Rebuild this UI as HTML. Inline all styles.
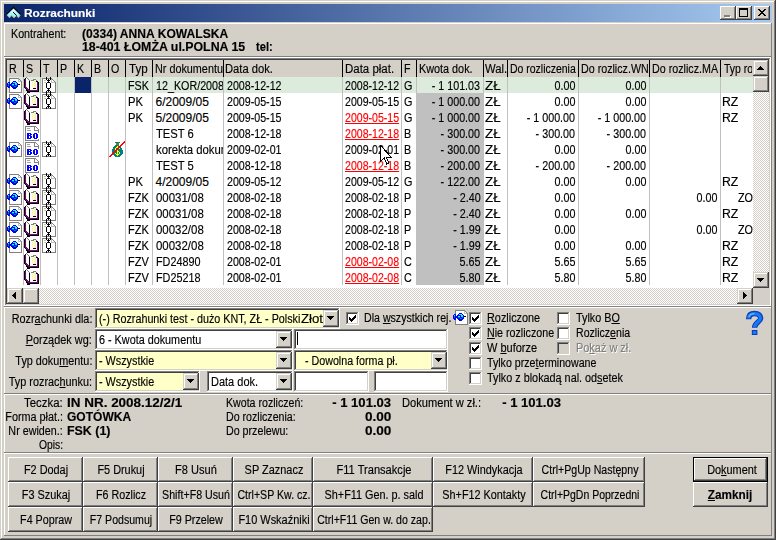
<!DOCTYPE html>
<html><head><meta charset="utf-8"><title>Rozrachunki</title>
<style>
*{box-sizing:border-box;margin:0;padding:0}
html,body{width:776px;height:540px;overflow:hidden;background:#D4D0C8}
body{position:relative;font-family:"Liberation Sans",sans-serif;font-size:12px;color:#000;line-height:14px}
div,svg,span{position:absolute}
.t{white-space:pre;line-height:14px;height:14px;-webkit-text-stroke:0.15px}
u{text-decoration:underline;text-underline-offset:1px}
.win{left:0;top:0;width:776px;height:540px;background:#D4D0C8;box-shadow:inset -1px -1px #404040,inset 1px 1px #D4D0C8,inset -2px -2px #808080,inset 2px 2px #fff}
.title{left:4px;top:4px;width:768px;height:18px;background:linear-gradient(to right,#0A246A,#A6CAF0)}
.tb{top:6px;width:16px;height:14px;background:#D4D0C8;box-shadow:inset -1px -1px #404040,inset 1px 1px #fff,inset -2px -2px #808080}
.raised{left:4px;width:768px;box-shadow:inset -1px -1px #808080,inset 1px 1px #fff}
.sunk{box-shadow:inset -1px -1px #fff,inset 1px 1px #808080,inset -2px -2px #D4D0C8,inset 2px 2px #404040}
.hs{width:1px;height:17px;top:60px;background:#000}
.ds{width:1px;top:77px;height:208px;background:#C0C0C0}
.clip{overflow:hidden}
.ic{shape-rendering:crispEdges}
.btn{height:25px;background:#D4D0C8;box-shadow:inset -1px -1px #404040,inset 1px 1px #fff,inset -2px -2px #808080}
.sbbtn{background:#D4D0C8;box-shadow:inset -1px -1px #404040,inset 1px 1px #D4D0C8,inset -2px -2px #808080,inset 2px 2px #fff}
.track{background-color:#fff;background-image:linear-gradient(45deg,#D4D0C8 25%,transparent 25%,transparent 75%,#D4D0C8 75%),linear-gradient(45deg,#D4D0C8 25%,transparent 25%,transparent 75%,#D4D0C8 75%);background-size:2px 2px;background-position:0 0,1px 1px}
.combo{height:21px;background:#fff}
.dd{top:2px;width:16px;height:17px;background:#D4D0C8;box-shadow:inset -1px -1px #404040,inset 1px 1px #D4D0C8,inset -2px -2px #808080,inset 2px 2px #fff}
.dd svg{left:4px;top:6px}
.yel{background:#FFFFC8}
.cb{width:13px;height:13px;background:#fff;box-shadow:inset -1px -1px #fff,inset 1px 1px #808080,inset -2px -2px #D4D0C8,inset 2px 2px #404040}
.cb.dis{background:#D4D0C8}
.cb svg{left:3px;top:3px}
</style></head><body>
<svg width="0" height="0" style="position:absolute"><symbol id="pin" viewBox="0 0 17 16"><path fill="#808080" d="M3 1h10v1H3zM3 2h1v1H3zM13 2h1v1H13zM3 3h1v1H3zM14 3h1v1H14zM3 4h1v1H3zM15 4h1v1H15zM15 5h1v1H15zM15 6h1v1H15zM15 7h1v1H15zM15 8h1v1H15zM15 9h1v1H15zM15 10h1v1H15zM3 11h1v1H3zM15 11h1v1H15zM3 12h1v1H3zM15 12h1v1H15zM3 13h1v1H3zM15 13h1v1H15zM3 14h1v1H3zM15 14h1v1H15zM3 15h13v1H3z"/><path fill="#FFFFFF" d="M4 2h8v1H4zM4 3h8v1H4zM13 3h1v1H13zM4 4h3v1H4zM10 4h2v1H10zM4 5h2v1H4zM11 5h4v1H11zM4 6h1v1H4zM12 6h3v1H12zM14 7h1v1H14zM12 8h3v1H12zM4 9h1v1H4zM12 9h3v1H12zM4 10h2v1H4zM11 10h4v1H11zM4 11h3v1H4zM10 11h5v1H10zM4 12h11v1H4zM4 13h11v1H4zM4 14h11v1H4z"/><path fill="#C0C0C0" d="M12 2h1v1H12zM12 3h1v1H12zM12 4h3v1H12z"/><path fill="#0000FF" d="M7 4h3v1H7zM2 5h2v1H2zM6 5h1v1H6zM10 5h1v1H10zM1 6h1v1H1zM3 6h1v1H3zM5 6h4v1H5zM11 6h1v1H11zM1 7h1v1H1zM3 7h3v1H3zM8 7h1v1H8zM11 7h1v1H11zM1 8h1v1H1zM3 8h3v1H3zM8 8h2v1H8zM11 8h1v1H11zM1 9h3v1H1zM5 9h3v1H5zM10 9h2v1H10zM2 10h2v1H2zM6 10h5v1H6zM7 11h3v1H7z"/><path fill="#00FFFF" d="M7 5h3v1H7zM2 6h1v1H2zM9 6h2v1H9zM6 7h2v1H6zM9 7h2v1H9z"/><path fill="#008080" d="M2 7h1v1H2zM2 8h1v1H2zM6 8h2v1H6zM10 8h1v1H10zM8 9h2v1H8z"/><path fill="#000000" d="M12 7h2v1H12z"/></symbol><symbol id="book" viewBox="0 0 17 16"><path fill="#808080" d="M2 0h1v1H2zM3 1h1v1H3zM4 2h1v1H4zM9 2h3v1H9zM5 3h1v1H5zM7 3h3v1H7zM12 3h1v1H12z"/><path fill="#000000" d="M1 1h1v1H1zM0 2h1v1H0zM0 3h1v1H0zM0 4h1v1H0zM5 4h1v1H5zM12 4h2v1H12zM0 5h1v1H0zM5 5h1v1H5zM14 5h1v1H14zM0 6h1v1H0zM5 6h1v1H5zM14 6h1v1H14zM0 7h1v1H0zM5 7h1v1H5zM14 7h1v1H14zM0 8h1v1H0zM5 8h1v1H5zM14 8h1v1H14zM0 9h1v1H0zM5 9h1v1H5zM14 9h1v1H14zM0 10h1v1H0zM5 10h1v1H5zM14 10h1v1H14zM1 11h1v1H1zM5 11h1v1H5zM9 11h3v1H9zM14 11h1v1H14zM2 12h1v1H2zM5 12h1v1H5zM14 12h1v1H14zM2 13h2v1H2zM14 13h1v1H14zM3 14h12v1H3zM3 15h3v1H3z"/><path fill="#FFFFFF" d="M2 1h1v1H2zM2 2h2v1H2zM2 3h3v1H2zM10 3h1v1H10zM2 4h3v1H2zM6 4h4v1H6zM2 5h3v1H2zM6 5h2v1H6zM9 5h2v1H9zM12 5h1v1H12zM2 6h3v1H2zM6 6h4v1H6zM12 6h1v1H12zM2 7h3v1H2zM6 7h2v1H6zM9 7h2v1H9zM12 7h1v1H12zM2 8h3v1H2zM6 8h4v1H6zM12 8h1v1H12zM2 9h3v1H2zM6 9h2v1H6zM9 9h2v1H9zM12 9h1v1H12zM3 10h2v1H3zM6 10h4v1H6zM12 10h1v1H12zM4 11h1v1H4zM6 11h3v1H6zM12 11h1v1H12zM6 12h7v1H6z"/><path fill="#800080" d="M1 2h1v1H1zM1 3h1v1H1zM1 4h1v1H1zM1 5h1v1H1zM13 5h1v1H13zM1 6h1v1H1zM13 6h1v1H13zM1 7h1v1H1zM13 7h1v1H13zM1 8h1v1H1zM13 8h1v1H13zM1 9h1v1H1zM13 9h1v1H13zM1 10h2v1H1zM13 10h1v1H13zM2 11h2v1H2zM13 11h1v1H13zM3 12h2v1H3zM13 12h1v1H13zM4 13h10v1H4z"/><path fill="#E8E8FF" d="M11 3h1v1H11zM11 4h1v1H11zM11 5h1v1H11zM11 6h1v1H11zM11 7h1v1H11zM11 8h1v1H11zM11 9h1v1H11zM11 10h1v1H11z"/><path fill="#FFFF00" d="M10 4h1v1H10zM8 5h1v1H8zM10 6h1v1H10zM8 7h1v1H8zM10 8h1v1H10zM8 9h1v1H8zM10 10h1v1H10z"/></symbol><symbol id="chain" viewBox="0 0 17 16"><path fill="#000000" d="M5 0h1v1H5zM9 0h1v1H9zM5 1h1v1H5zM9 1h1v1H9zM5 2h1v1H5zM7 2h1v1H7zM9 2h1v1H9zM6 3h3v1H6zM7 4h1v1H7zM6 5h3v1H6zM5 6h1v1H5zM9 6h1v1H9zM5 7h1v1H5zM9 7h1v1H9zM5 8h1v1H5zM9 8h1v1H9zM5 9h1v1H5zM9 9h1v1H9zM5 10h1v1H5zM9 10h1v1H9zM6 11h3v1H6zM7 12h1v1H7zM6 13h3v1H6zM5 14h1v1H5zM7 14h1v1H7zM9 14h1v1H9zM5 15h1v1H5zM9 15h1v1H9z"/><path fill="#808080" d="M1 1h4v1H1zM6 1h3v1H6zM10 1h1v1H10zM1 2h1v1H1zM11 2h1v1H11zM1 3h1v1H1zM12 3h1v1H12zM1 4h1v1H1zM13 4h1v1H13zM1 5h1v1H1zM14 5h1v1H14zM1 6h1v1H1zM14 6h1v1H14zM1 7h1v1H1zM14 7h1v1H14zM1 8h1v1H1zM14 8h1v1H14zM1 9h1v1H1zM14 9h1v1H14zM1 10h1v1H1zM14 10h1v1H14zM1 11h1v1H1zM14 11h1v1H14zM1 12h1v1H1zM14 12h1v1H14zM1 13h1v1H1zM14 13h1v1H14zM1 14h1v1H1zM14 14h1v1H14zM1 15h4v1H1zM6 15h3v1H6zM10 15h5v1H10z"/><path fill="#FFFFFF" d="M2 2h3v1H2zM6 2h1v1H6zM8 2h1v1H8zM2 3h1v1H2zM5 3h1v1H5zM9 3h1v1H9zM11 3h1v1H11zM2 4h5v1H2zM8 4h2v1H8zM11 4h2v1H11zM2 5h1v1H2zM5 5h1v1H5zM9 5h1v1H9zM2 6h3v1H2zM6 6h3v1H6zM10 6h4v1H10zM2 7h3v1H2zM6 7h3v1H6zM10 7h4v1H10zM2 8h3v1H2zM6 8h3v1H6zM10 8h4v1H10zM2 9h3v1H2zM6 9h3v1H6zM10 9h4v1H10zM2 10h3v1H2zM6 10h3v1H6zM10 10h4v1H10zM2 11h4v1H2zM9 11h5v1H9zM2 12h5v1H2zM8 12h6v1H8zM2 13h4v1H2zM9 13h5v1H9zM2 14h3v1H2zM6 14h1v1H6zM8 14h1v1H8zM10 14h4v1H10z"/><path fill="#C0C0C0" d="M10 2h1v1H10zM3 3h2v1H3zM10 3h1v1H10zM10 4h1v1H10zM3 5h2v1H3zM10 5h4v1H10z"/></symbol><symbol id="bo" viewBox="0 0 17 16"><path fill="#808080" d="M1 1h11v1H1zM1 2h1v1H1zM10 2h1v1H10zM12 2h1v1H12zM1 3h1v1H1zM10 3h1v1H10zM13 3h1v1H13zM1 4h1v1H1zM10 4h1v1H10zM14 4h1v1H14zM1 5h1v1H1zM10 5h5v1H10zM1 6h1v1H1zM14 6h1v1H14zM1 7h1v1H1zM14 7h1v1H14zM1 8h1v1H1zM1 9h1v1H1zM1 10h1v1H1zM1 11h1v1H1zM1 12h1v1H1zM1 13h1v1H1zM1 14h1v1H1zM14 14h1v1H14zM1 15h14v1H1z"/><path fill="#FFFFFF" d="M2 2h8v1H2zM11 2h1v1H11zM2 3h1v1H2zM6 3h4v1H6zM11 3h2v1H11zM2 4h8v1H2zM11 4h3v1H11zM2 5h1v1H2zM7 5h3v1H7zM2 6h12v1H2zM2 7h12v1H2zM2 8h1v1H2zM7 8h3v1H7zM13 8h2v1H13zM2 9h1v1H2zM5 9h1v1H5zM8 9h1v1H8zM11 9h1v1H11zM14 9h1v1H14zM2 10h1v1H2zM7 10h2v1H7zM11 10h1v1H11zM14 10h1v1H14zM2 11h1v1H2zM5 11h1v1H5zM8 11h1v1H8zM11 11h1v1H11zM14 11h1v1H14zM2 12h1v1H2zM5 12h1v1H5zM8 12h1v1H8zM11 12h1v1H11zM14 12h1v1H14zM2 13h1v1H2zM7 13h3v1H7zM13 13h2v1H13zM2 14h12v1H2z"/><path fill="#A0A0A0" d="M3 3h3v1H3zM3 5h4v1H3z"/><path fill="#0000FF" d="M3 8h4v1H3zM10 8h3v1H10zM3 9h2v1H3zM6 9h2v1H6zM9 9h2v1H9zM12 9h2v1H12zM3 10h4v1H3zM9 10h2v1H9zM12 10h2v1H12zM3 11h2v1H3zM6 11h2v1H6zM9 11h2v1H9zM12 11h2v1H12zM3 12h2v1H3zM6 12h2v1H6zM9 12h2v1H9zM12 12h2v1H12zM3 13h4v1H3zM10 13h3v1H10z"/></symbol><symbol id="money" viewBox="0 0 17 16"><path fill="#FF0000" d="M16 0h1v1H16zM15 1h2v1H15zM14 2h2v1H14zM13 3h2v1H13zM12 4h2v1H12zM11 5h2v1H11zM10 6h2v1H10zM9 7h2v1H9zM8 8h2v1H8zM7 9h2v1H7zM6 10h2v1H6zM5 11h2v1H5zM4 12h2v1H4zM3 13h2v1H3zM2 14h2v1H2zM1 15h2v1H1z"/><path fill="#008080" d="M7 1h5v1H7zM7 4h4v1H7zM6 5h3v1H6zM10 5h1v1H10zM5 6h3v1H5zM12 6h1v1H12zM5 7h2v1H5zM8 7h1v1H8zM12 7h2v1H12zM4 8h3v1H4zM10 8h4v1H10zM4 9h3v1H4zM10 9h5v1H10zM4 10h2v1H4zM8 10h1v1H8zM11 10h4v1H11zM4 11h1v1H4zM7 11h2v1H7zM10 11h1v1H10zM12 11h3v1H12zM6 12h1v1H6zM8 12h1v1H8zM10 12h1v1H10zM12 12h3v1H12zM5 13h3v1H5zM11 13h3v1H11zM6 14h3v1H6zM10 14h3v1H10zM7 15h5v1H7z"/><path fill="#808000" d="M8 2h3v1H8zM8 3h3v1H8z"/><path fill="#FFFF00" d="M9 5h1v1H9zM8 6h2v1H8zM7 7h1v1H7zM11 7h1v1H11zM7 8h1v1H7zM9 9h1v1H9zM9 10h2v1H9zM9 11h1v1H9zM11 11h1v1H11zM7 12h1v1H7zM9 12h1v1H9zM11 12h1v1H11zM8 13h3v1H8zM9 14h1v1H9z"/></symbol></svg>
<div class="win"></div>
<div class="title"></div>
<svg style="left:4px;top:4px" width="20" height="18" viewBox="4 4 20 18"><defs><linearGradient id="tg" x1="0" y1="0" x2="0" y2="1"><stop offset="0" stop-color="#fff"/><stop offset="1" stop-color="#70F0F8"/></linearGradient></defs><path d="M13.5 7.5L6.5 14.5L9.5 17.8L11.5 15.6L14 17.8L16.5 15.6L18.5 17.8L20.5 14.5Z" fill="url(#tg)"/><path d="M6.5 14.5L9.5 17.8L11.5 15.6L14 17.8L16.5 15.6L18.5 17.8L20.5 14.5" fill="none" stroke="#C0B098" stroke-width="1"/><path d="M6.3 14.7L13.5 7.5L20.7 14.7" fill="none" stroke="#000" stroke-width="1.2"/><path d="M13 12L16.6 15.6" stroke="#000" stroke-width="1"/></svg>
<div class="t" style="top:6px;font-size:11px;font-weight:bold;color:#fff;left:23.5px;transform-origin:0 0;transform:scaleX(1.079);">Rozrachunki</div>
<div class="tb" style="left:720px"><div style="left:5px;top:10px;width:6px;height:2px;background:#fff"></div><div style="left:4px;top:9px;width:6px;height:2px;background:#808080"></div></div>
<div class="tb" style="left:736px"><div style="left:3px;top:2px;width:9px;height:9px;border:1px solid #000;border-top-width:2px"></div></div>
<div class="tb" style="left:754px"><svg style="left:4px;top:3px" width="8" height="7" viewBox="0 0 8 7" shape-rendering="crispEdges"><path d="M0 0h2v1h1v1h2V1h1V0h2v1H7v1H6v1H5v1h1v1h1v1h1v1H6V6H5V5H3v1H2v1H0V6h1V5h1V4h1V3H2V2H1V1H0z" fill="#000"/></svg></div>
<div class="raised" style="top:23px;height:34px"></div>
<div class="raised" style="top:57px;height:250px"></div>
<div class="raised" style="top:307px;height:87px"></div>
<div class="raised" style="top:394px;height:59px"></div>
<div class="raised" style="top:453px;height:83px"></div>
<div class="t" style="top:27px;left:11.3px;transform-origin:0 0;transform:scaleX(0.892);">Kontrahent:</div>
<div class="t" style="top:27px;font-weight:bold;left:81.5px;transform-origin:0 0;transform:scaleX(1.007);">(0334) ANNA KOWALSKA</div>
<div class="t" style="top:40px;font-weight:bold;left:81.5px;transform-origin:0 0;transform:scaleX(1.03);">18-401 ŁOMŻA ul.POLNA 15</div>
<div class="t" style="top:40px;font-weight:bold;left:256.3px;transform-origin:0 0;transform:scaleX(0.928);">tel:</div>
<div style="left:5px;top:58px;width:766px;height:248px;background:#fff"></div>
<div style="left:7px;top:60px;width:746px;height:17px;background:#D4D0C8"></div>
<div class="clip" style="left:7px;top:60px;width:16px;height:17px">
<div class="t" style="top:2px;left:2.2px;transform-origin:0 0;transform:scaleX(0.89);">R</div>
</div>
<div class="clip" style="left:24px;top:60px;width:16px;height:17px">
<div class="t" style="top:2px;left:2.2px;transform-origin:0 0;transform:scaleX(0.89);">S</div>
</div>
<div class="clip" style="left:41px;top:60px;width:16px;height:17px">
<div class="t" style="top:2px;left:2.2px;transform-origin:0 0;transform:scaleX(0.89);">T</div>
</div>
<div class="clip" style="left:58px;top:60px;width:16px;height:17px">
<div class="t" style="top:2px;left:2.2px;transform-origin:0 0;transform:scaleX(0.89);">P</div>
</div>
<div class="clip" style="left:75px;top:60px;width:16px;height:17px">
<div class="t" style="top:2px;left:2.2px;transform-origin:0 0;transform:scaleX(0.89);">K</div>
</div>
<div class="clip" style="left:92px;top:60px;width:16px;height:17px">
<div class="t" style="top:2px;left:2.2px;transform-origin:0 0;transform:scaleX(0.89);">B</div>
</div>
<div class="clip" style="left:109px;top:60px;width:16px;height:17px">
<div class="t" style="top:2px;left:2.2px;transform-origin:0 0;transform:scaleX(0.89);">O</div>
</div>
<div class="clip" style="left:126px;top:60px;width:26px;height:17px">
<div class="t" style="top:2px;left:2.8px;transform-origin:0 0;transform:scaleX(0.964);">Typ</div>
</div>
<div class="clip" style="left:153px;top:60px;width:70px;height:17px">
<div class="t" style="top:2px;left:1.9px;transform-origin:0 0;transform:scaleX(0.901);">Nr dokumentu</div>
</div>
<div class="clip" style="left:224px;top:60px;width:118px;height:17px">
<div class="t" style="top:2px;left:1.4px;transform-origin:0 0;transform:scaleX(0.934);">Data dok.</div>
</div>
<div class="clip" style="left:343px;top:60px;width:58px;height:17px">
<div class="t" style="top:2px;left:1.5px;transform-origin:0 0;transform:scaleX(0.956);">Data płat.</div>
</div>
<div class="clip" style="left:402px;top:60px;width:14px;height:17px">
<div class="t" style="top:2px;left:2.1px;transform-origin:0 0;transform:scaleX(0.89);">F</div>
</div>
<div class="clip" style="left:417px;top:60px;width:66px;height:17px">
<div class="t" style="top:2px;left:2.0px;transform-origin:0 0;transform:scaleX(0.902);">Kwota dok.</div>
</div>
<div class="clip" style="left:484px;top:60px;width:23px;height:17px">
<div class="t" style="top:2px;left:1.2px;transform-origin:0 0;transform:scaleX(0.938);">Wal.</div>
</div>
<div class="clip" style="left:508px;top:60px;width:70px;height:17px">
<div class="t" style="top:2px;left:2.4px;transform-origin:0 0;transform:scaleX(0.872);">Do rozliczenia</div>
</div>
<div class="clip" style="left:579px;top:60px;width:70px;height:17px">
<div class="t" style="top:2px;left:2.1px;transform-origin:0 0;transform:scaleX(0.891);">Do rozlicz.WN</div>
</div>
<div class="clip" style="left:650px;top:60px;width:70px;height:17px">
<div class="t" style="top:2px;left:1.7px;transform-origin:0 0;transform:scaleX(0.892);">Do rozlicz.MA</div>
</div>
<div class="clip" style="left:721px;top:60px;width:31px;height:17px">
<div class="t" style="top:2px;left:2.7px;transform-origin:0 0;transform:scaleX(0.872);">Typ ro</div>
</div>
<div style="left:7px;top:77px;width:746px;height:16px;background:#DDEBDD"></div>
<div style="left:75px;top:77px;width:16px;height:16px;background:#0A246A"></div>
<svg class="ic" style="left:6px;top:77px" width="17" height="16"><use href="#pin"/></svg>
<svg class="ic" style="left:24px;top:77px" width="17" height="16"><use href="#book"/></svg>
<svg class="ic" style="left:41px;top:77px" width="17" height="16"><use href="#chain"/></svg>
<div class="clip" style="left:126px;top:77px;width:26px;height:16px">
<div class="t" style="top:2px;left:2.2px;transform-origin:0 0;transform:scaleX(0.892);">FSK</div>
</div>
<div class="clip" style="left:153px;top:77px;width:70px;height:16px">
<div class="t" style="top:2px;left:2.6px;transform-origin:0 0;transform:scaleX(0.894);">12_KOR/2008/12</div>
</div>
<div class="clip" style="left:224px;top:77px;width:118px;height:16px">
<div class="t" style="top:2px;left:2.5px;transform-origin:0 0;transform:scaleX(0.888);">2008-12-12</div>
</div>
<div class="clip" style="left:343px;top:77px;width:58px;height:16px">
<div class="t" style="top:2px;left:2.3px;transform-origin:0 0;transform:scaleX(0.882);">2008-12-12</div>
</div>
<div class="clip" style="left:402px;top:77px;width:14px;height:16px">
<div class="t" style="top:2px;left:1.7px;transform-origin:0 0;transform:scaleX(0.9);">G</div>
</div>
<div class="clip" style="left:417px;top:77px;width:66px;height:16px">
<div class="t" style="top:2px;transform-origin:100% 0;transform:scaleX(0.895);right:2.6px;">- 1 101.03</div>
</div>
<div class="clip" style="left:484px;top:77px;width:23px;height:16px">
<div class="t" style="top:2px;left:1.0px;transform-origin:0 0;transform:scaleX(1.116);">ZŁ</div>
</div>
<div class="clip" style="left:508px;top:77px;width:70px;height:16px">
<div class="t" style="top:2px;transform-origin:100% 0;transform:scaleX(0.895);right:2.6px;">0.00</div>
</div>
<div class="clip" style="left:579px;top:77px;width:70px;height:16px">
<div class="t" style="top:2px;transform-origin:100% 0;transform:scaleX(0.895);right:2.6px;">0.00</div>
</div>
<div style="left:417px;top:93px;width:66px;height:16px;background:#C0C0C0"></div>
<svg class="ic" style="left:6px;top:93px" width="17" height="16"><use href="#pin"/></svg>
<svg class="ic" style="left:24px;top:93px" width="17" height="16"><use href="#book"/></svg>
<svg class="ic" style="left:41px;top:93px" width="17" height="16"><use href="#chain"/></svg>
<div class="clip" style="left:126px;top:93px;width:26px;height:16px">
<div class="t" style="top:2px;left:2.1px;transform-origin:0 0;transform:scaleX(0.936);">PK</div>
</div>
<div class="clip" style="left:153px;top:93px;width:70px;height:16px">
<div class="t" style="top:2px;left:2.5px;transform-origin:0 0;transform:scaleX(1.0);">6/2009/05</div>
</div>
<div class="clip" style="left:224px;top:93px;width:118px;height:16px">
<div class="t" style="top:2px;left:2.5px;transform-origin:0 0;transform:scaleX(0.888);">2009-05-15</div>
</div>
<div class="clip" style="left:343px;top:93px;width:58px;height:16px">
<div class="t" style="top:2px;left:2.3px;transform-origin:0 0;transform:scaleX(0.882);">2009-05-15</div>
</div>
<div class="clip" style="left:402px;top:93px;width:14px;height:16px">
<div class="t" style="top:2px;left:1.7px;transform-origin:0 0;transform:scaleX(0.9);">G</div>
</div>
<div class="clip" style="left:417px;top:93px;width:66px;height:16px">
<div class="t" style="top:2px;transform-origin:100% 0;transform:scaleX(0.895);right:2.6px;">- 1 000.00</div>
</div>
<div class="clip" style="left:484px;top:93px;width:23px;height:16px">
<div class="t" style="top:2px;left:1.0px;transform-origin:0 0;transform:scaleX(1.116);">ZŁ</div>
</div>
<div class="clip" style="left:508px;top:93px;width:70px;height:16px">
<div class="t" style="top:2px;transform-origin:100% 0;transform:scaleX(0.895);right:2.6px;">0.00</div>
</div>
<div class="clip" style="left:579px;top:93px;width:70px;height:16px">
<div class="t" style="top:2px;transform-origin:100% 0;transform:scaleX(0.895);right:2.6px;">0.00</div>
</div>
<div class="clip" style="left:721px;top:93px;width:31px;height:16px">
<div class="t" style="top:2px;left:1.4px;transform-origin:0 0;transform:scaleX(1.021);">RZ</div>
</div>
<div style="left:417px;top:109px;width:66px;height:16px;background:#C0C0C0"></div>
<svg class="ic" style="left:24px;top:109px" width="17" height="16"><use href="#book"/></svg>
<div class="clip" style="left:126px;top:109px;width:26px;height:16px">
<div class="t" style="top:2px;left:2.1px;transform-origin:0 0;transform:scaleX(0.936);">PK</div>
</div>
<div class="clip" style="left:153px;top:109px;width:70px;height:16px">
<div class="t" style="top:2px;left:2.5px;transform-origin:0 0;transform:scaleX(1.0);">5/2009/05</div>
</div>
<div class="clip" style="left:224px;top:109px;width:118px;height:16px">
<div class="t" style="top:2px;left:2.5px;transform-origin:0 0;transform:scaleX(0.888);">2009-05-15</div>
</div>
<div class="clip" style="left:343px;top:109px;width:58px;height:16px">
<div class="t" style="top:2px;color:#FF0000;left:2.3px;transform-origin:0 0;transform:scaleX(0.882);"><u>2009-05-15</u></div>
</div>
<div class="clip" style="left:402px;top:109px;width:14px;height:16px">
<div class="t" style="top:2px;left:1.7px;transform-origin:0 0;transform:scaleX(0.9);">G</div>
</div>
<div class="clip" style="left:417px;top:109px;width:66px;height:16px">
<div class="t" style="top:2px;transform-origin:100% 0;transform:scaleX(0.895);right:2.6px;">- 1 000.00</div>
</div>
<div class="clip" style="left:484px;top:109px;width:23px;height:16px">
<div class="t" style="top:2px;left:1.0px;transform-origin:0 0;transform:scaleX(1.116);">ZŁ</div>
</div>
<div class="clip" style="left:508px;top:109px;width:70px;height:16px">
<div class="t" style="top:2px;transform-origin:100% 0;transform:scaleX(0.895);right:2.6px;">- 1 000.00</div>
</div>
<div class="clip" style="left:579px;top:109px;width:70px;height:16px">
<div class="t" style="top:2px;transform-origin:100% 0;transform:scaleX(0.895);right:2.6px;">- 1 000.00</div>
</div>
<div class="clip" style="left:721px;top:109px;width:31px;height:16px">
<div class="t" style="top:2px;left:1.4px;transform-origin:0 0;transform:scaleX(1.021);">RZ</div>
</div>
<div style="left:417px;top:125px;width:66px;height:16px;background:#C0C0C0"></div>
<svg class="ic" style="left:24px;top:125px" width="17" height="16"><use href="#bo"/></svg>
<div class="clip" style="left:153px;top:125px;width:70px;height:16px">
<div class="t" style="top:2px;left:2.5px;transform-origin:0 0;transform:scaleX(0.936);">TEST 6</div>
</div>
<div class="clip" style="left:224px;top:125px;width:118px;height:16px">
<div class="t" style="top:2px;left:2.5px;transform-origin:0 0;transform:scaleX(0.888);">2008-12-18</div>
</div>
<div class="clip" style="left:343px;top:125px;width:58px;height:16px">
<div class="t" style="top:2px;color:#FF0000;left:2.3px;transform-origin:0 0;transform:scaleX(0.882);"><u>2008-12-18</u></div>
</div>
<div class="clip" style="left:402px;top:125px;width:14px;height:16px">
<div class="t" style="top:2px;left:1.7px;transform-origin:0 0;transform:scaleX(0.9);">B</div>
</div>
<div class="clip" style="left:417px;top:125px;width:66px;height:16px">
<div class="t" style="top:2px;transform-origin:100% 0;transform:scaleX(0.895);right:2.6px;">- 300.00</div>
</div>
<div class="clip" style="left:484px;top:125px;width:23px;height:16px">
<div class="t" style="top:2px;left:1.0px;transform-origin:0 0;transform:scaleX(1.116);">ZŁ</div>
</div>
<div class="clip" style="left:508px;top:125px;width:70px;height:16px">
<div class="t" style="top:2px;transform-origin:100% 0;transform:scaleX(0.895);right:2.6px;">- 300.00</div>
</div>
<div class="clip" style="left:579px;top:125px;width:70px;height:16px">
<div class="t" style="top:2px;transform-origin:100% 0;transform:scaleX(0.895);right:2.6px;">- 300.00</div>
</div>
<div style="left:417px;top:141px;width:66px;height:16px;background:#C0C0C0"></div>
<svg class="ic" style="left:6px;top:141px" width="17" height="16"><use href="#pin"/></svg>
<svg class="ic" style="left:24px;top:141px" width="17" height="16"><use href="#bo"/></svg>
<svg class="ic" style="left:41px;top:141px" width="17" height="16"><use href="#chain"/></svg>
<svg class="ic" style="left:108px;top:141px" width="17" height="16"><use href="#money"/></svg>
<div class="clip" style="left:153px;top:141px;width:70px;height:16px">
<div class="t" style="top:2px;left:2.5px;transform-origin:0 0;transform:scaleX(0.942);">korekta dokumentu</div>
</div>
<div class="clip" style="left:224px;top:141px;width:118px;height:16px">
<div class="t" style="top:2px;left:2.5px;transform-origin:0 0;transform:scaleX(0.888);">2009-02-01</div>
</div>
<div class="clip" style="left:343px;top:141px;width:58px;height:16px">
<div class="t" style="top:2px;left:2.3px;transform-origin:0 0;transform:scaleX(0.882);">2009-02-01</div>
</div>
<div class="clip" style="left:402px;top:141px;width:14px;height:16px">
<div class="t" style="top:2px;left:1.7px;transform-origin:0 0;transform:scaleX(0.9);">B</div>
</div>
<div class="clip" style="left:417px;top:141px;width:66px;height:16px">
<div class="t" style="top:2px;transform-origin:100% 0;transform:scaleX(0.895);right:2.6px;">- 300.00</div>
</div>
<div class="clip" style="left:484px;top:141px;width:23px;height:16px">
<div class="t" style="top:2px;left:1.0px;transform-origin:0 0;transform:scaleX(1.116);">ZŁ</div>
</div>
<div class="clip" style="left:508px;top:141px;width:70px;height:16px">
<div class="t" style="top:2px;transform-origin:100% 0;transform:scaleX(0.895);right:2.6px;">0.00</div>
</div>
<div class="clip" style="left:579px;top:141px;width:70px;height:16px">
<div class="t" style="top:2px;transform-origin:100% 0;transform:scaleX(0.895);right:2.6px;">0.00</div>
</div>
<div style="left:417px;top:157px;width:66px;height:16px;background:#C0C0C0"></div>
<svg class="ic" style="left:24px;top:157px" width="17" height="16"><use href="#bo"/></svg>
<div class="clip" style="left:153px;top:157px;width:70px;height:16px">
<div class="t" style="top:2px;left:2.5px;transform-origin:0 0;transform:scaleX(0.936);">TEST 5</div>
</div>
<div class="clip" style="left:224px;top:157px;width:118px;height:16px">
<div class="t" style="top:2px;left:2.5px;transform-origin:0 0;transform:scaleX(0.888);">2008-12-18</div>
</div>
<div class="clip" style="left:343px;top:157px;width:58px;height:16px">
<div class="t" style="top:2px;color:#FF0000;left:2.3px;transform-origin:0 0;transform:scaleX(0.882);"><u>2008-12-18</u></div>
</div>
<div class="clip" style="left:402px;top:157px;width:14px;height:16px">
<div class="t" style="top:2px;left:1.7px;transform-origin:0 0;transform:scaleX(0.9);">B</div>
</div>
<div class="clip" style="left:417px;top:157px;width:66px;height:16px">
<div class="t" style="top:2px;transform-origin:100% 0;transform:scaleX(0.895);right:2.6px;">- 200.00</div>
</div>
<div class="clip" style="left:484px;top:157px;width:23px;height:16px">
<div class="t" style="top:2px;left:1.0px;transform-origin:0 0;transform:scaleX(1.116);">ZŁ</div>
</div>
<div class="clip" style="left:508px;top:157px;width:70px;height:16px">
<div class="t" style="top:2px;transform-origin:100% 0;transform:scaleX(0.895);right:2.6px;">- 200.00</div>
</div>
<div class="clip" style="left:579px;top:157px;width:70px;height:16px">
<div class="t" style="top:2px;transform-origin:100% 0;transform:scaleX(0.895);right:2.6px;">- 200.00</div>
</div>
<div style="left:417px;top:173px;width:66px;height:16px;background:#C0C0C0"></div>
<svg class="ic" style="left:6px;top:173px" width="17" height="16"><use href="#pin"/></svg>
<svg class="ic" style="left:24px;top:173px" width="17" height="16"><use href="#book"/></svg>
<svg class="ic" style="left:41px;top:173px" width="17" height="16"><use href="#chain"/></svg>
<div class="clip" style="left:126px;top:173px;width:26px;height:16px">
<div class="t" style="top:2px;left:2.1px;transform-origin:0 0;transform:scaleX(0.936);">PK</div>
</div>
<div class="clip" style="left:153px;top:173px;width:70px;height:16px">
<div class="t" style="top:2px;left:2.5px;transform-origin:0 0;transform:scaleX(1.0);">4/2009/05</div>
</div>
<div class="clip" style="left:224px;top:173px;width:118px;height:16px">
<div class="t" style="top:2px;left:2.5px;transform-origin:0 0;transform:scaleX(0.888);">2009-05-12</div>
</div>
<div class="clip" style="left:343px;top:173px;width:58px;height:16px">
<div class="t" style="top:2px;left:2.3px;transform-origin:0 0;transform:scaleX(0.882);">2009-05-12</div>
</div>
<div class="clip" style="left:402px;top:173px;width:14px;height:16px">
<div class="t" style="top:2px;left:1.7px;transform-origin:0 0;transform:scaleX(0.9);">G</div>
</div>
<div class="clip" style="left:417px;top:173px;width:66px;height:16px">
<div class="t" style="top:2px;transform-origin:100% 0;transform:scaleX(0.895);right:2.6px;">- 122.00</div>
</div>
<div class="clip" style="left:484px;top:173px;width:23px;height:16px">
<div class="t" style="top:2px;left:1.0px;transform-origin:0 0;transform:scaleX(1.116);">ZŁ</div>
</div>
<div class="clip" style="left:508px;top:173px;width:70px;height:16px">
<div class="t" style="top:2px;transform-origin:100% 0;transform:scaleX(0.895);right:2.6px;">0.00</div>
</div>
<div class="clip" style="left:579px;top:173px;width:70px;height:16px">
<div class="t" style="top:2px;transform-origin:100% 0;transform:scaleX(0.895);right:2.6px;">0.00</div>
</div>
<div class="clip" style="left:721px;top:173px;width:31px;height:16px">
<div class="t" style="top:2px;left:1.4px;transform-origin:0 0;transform:scaleX(1.021);">RZ</div>
</div>
<div style="left:417px;top:189px;width:66px;height:16px;background:#C0C0C0"></div>
<svg class="ic" style="left:6px;top:189px" width="17" height="16"><use href="#pin"/></svg>
<svg class="ic" style="left:24px;top:189px" width="17" height="16"><use href="#book"/></svg>
<svg class="ic" style="left:41px;top:189px" width="17" height="16"><use href="#chain"/></svg>
<div class="clip" style="left:126px;top:189px;width:26px;height:16px">
<div class="t" style="top:2px;left:2.1px;transform-origin:0 0;transform:scaleX(0.92);">FZK</div>
</div>
<div class="clip" style="left:153px;top:189px;width:70px;height:16px">
<div class="t" style="top:2px;left:2.5px;transform-origin:0 0;transform:scaleX(0.955);">00031/08</div>
</div>
<div class="clip" style="left:224px;top:189px;width:118px;height:16px">
<div class="t" style="top:2px;left:2.5px;transform-origin:0 0;transform:scaleX(0.888);">2008-02-18</div>
</div>
<div class="clip" style="left:343px;top:189px;width:58px;height:16px">
<div class="t" style="top:2px;left:2.3px;transform-origin:0 0;transform:scaleX(0.882);">2008-02-18</div>
</div>
<div class="clip" style="left:402px;top:189px;width:14px;height:16px">
<div class="t" style="top:2px;left:1.7px;transform-origin:0 0;transform:scaleX(0.9);">P</div>
</div>
<div class="clip" style="left:417px;top:189px;width:66px;height:16px">
<div class="t" style="top:2px;transform-origin:100% 0;transform:scaleX(0.895);right:2.6px;">- 2.40</div>
</div>
<div class="clip" style="left:484px;top:189px;width:23px;height:16px">
<div class="t" style="top:2px;left:1.0px;transform-origin:0 0;transform:scaleX(1.116);">ZŁ</div>
</div>
<div class="clip" style="left:508px;top:189px;width:70px;height:16px">
<div class="t" style="top:2px;transform-origin:100% 0;transform:scaleX(0.895);right:2.6px;">0.00</div>
</div>
<div class="clip" style="left:650px;top:189px;width:70px;height:16px">
<div class="t" style="top:2px;transform-origin:100% 0;transform:scaleX(0.895);right:2.6px;">0.00</div>
</div>
<div class="clip" style="left:721px;top:189px;width:32px;height:16px">
<div class="t" style="top:2px;left:16.6px;transform-origin:0 0;transform:scaleX(0.9);">ZO</div>
</div>
<div style="left:417px;top:205px;width:66px;height:16px;background:#C0C0C0"></div>
<svg class="ic" style="left:6px;top:205px" width="17" height="16"><use href="#pin"/></svg>
<svg class="ic" style="left:24px;top:205px" width="17" height="16"><use href="#book"/></svg>
<svg class="ic" style="left:41px;top:205px" width="17" height="16"><use href="#chain"/></svg>
<div class="clip" style="left:126px;top:205px;width:26px;height:16px">
<div class="t" style="top:2px;left:2.1px;transform-origin:0 0;transform:scaleX(0.92);">FZK</div>
</div>
<div class="clip" style="left:153px;top:205px;width:70px;height:16px">
<div class="t" style="top:2px;left:2.5px;transform-origin:0 0;transform:scaleX(0.955);">00031/08</div>
</div>
<div class="clip" style="left:224px;top:205px;width:118px;height:16px">
<div class="t" style="top:2px;left:2.5px;transform-origin:0 0;transform:scaleX(0.888);">2008-02-18</div>
</div>
<div class="clip" style="left:343px;top:205px;width:58px;height:16px">
<div class="t" style="top:2px;left:2.3px;transform-origin:0 0;transform:scaleX(0.882);">2008-02-18</div>
</div>
<div class="clip" style="left:402px;top:205px;width:14px;height:16px">
<div class="t" style="top:2px;left:1.7px;transform-origin:0 0;transform:scaleX(0.9);">P</div>
</div>
<div class="clip" style="left:417px;top:205px;width:66px;height:16px">
<div class="t" style="top:2px;transform-origin:100% 0;transform:scaleX(0.895);right:2.6px;">- 2.40</div>
</div>
<div class="clip" style="left:484px;top:205px;width:23px;height:16px">
<div class="t" style="top:2px;left:1.0px;transform-origin:0 0;transform:scaleX(1.116);">ZŁ</div>
</div>
<div class="clip" style="left:508px;top:205px;width:70px;height:16px">
<div class="t" style="top:2px;transform-origin:100% 0;transform:scaleX(0.895);right:2.6px;">0.00</div>
</div>
<div class="clip" style="left:579px;top:205px;width:70px;height:16px">
<div class="t" style="top:2px;transform-origin:100% 0;transform:scaleX(0.895);right:2.6px;">0.00</div>
</div>
<div class="clip" style="left:721px;top:205px;width:31px;height:16px">
<div class="t" style="top:2px;left:1.4px;transform-origin:0 0;transform:scaleX(1.021);">RZ</div>
</div>
<div style="left:417px;top:221px;width:66px;height:16px;background:#C0C0C0"></div>
<svg class="ic" style="left:6px;top:221px" width="17" height="16"><use href="#pin"/></svg>
<svg class="ic" style="left:24px;top:221px" width="17" height="16"><use href="#book"/></svg>
<svg class="ic" style="left:41px;top:221px" width="17" height="16"><use href="#chain"/></svg>
<div class="clip" style="left:126px;top:221px;width:26px;height:16px">
<div class="t" style="top:2px;left:2.1px;transform-origin:0 0;transform:scaleX(0.92);">FZK</div>
</div>
<div class="clip" style="left:153px;top:221px;width:70px;height:16px">
<div class="t" style="top:2px;left:2.5px;transform-origin:0 0;transform:scaleX(0.955);">00032/08</div>
</div>
<div class="clip" style="left:224px;top:221px;width:118px;height:16px">
<div class="t" style="top:2px;left:2.5px;transform-origin:0 0;transform:scaleX(0.888);">2008-02-18</div>
</div>
<div class="clip" style="left:343px;top:221px;width:58px;height:16px">
<div class="t" style="top:2px;left:2.3px;transform-origin:0 0;transform:scaleX(0.882);">2008-02-18</div>
</div>
<div class="clip" style="left:402px;top:221px;width:14px;height:16px">
<div class="t" style="top:2px;left:1.7px;transform-origin:0 0;transform:scaleX(0.9);">P</div>
</div>
<div class="clip" style="left:417px;top:221px;width:66px;height:16px">
<div class="t" style="top:2px;transform-origin:100% 0;transform:scaleX(0.895);right:2.6px;">- 1.99</div>
</div>
<div class="clip" style="left:484px;top:221px;width:23px;height:16px">
<div class="t" style="top:2px;left:1.0px;transform-origin:0 0;transform:scaleX(1.116);">ZŁ</div>
</div>
<div class="clip" style="left:508px;top:221px;width:70px;height:16px">
<div class="t" style="top:2px;transform-origin:100% 0;transform:scaleX(0.895);right:2.6px;">0.00</div>
</div>
<div class="clip" style="left:650px;top:221px;width:70px;height:16px">
<div class="t" style="top:2px;transform-origin:100% 0;transform:scaleX(0.895);right:2.6px;">0.00</div>
</div>
<div class="clip" style="left:721px;top:221px;width:32px;height:16px">
<div class="t" style="top:2px;left:16.6px;transform-origin:0 0;transform:scaleX(0.9);">ZO</div>
</div>
<div style="left:417px;top:237px;width:66px;height:16px;background:#C0C0C0"></div>
<svg class="ic" style="left:6px;top:237px" width="17" height="16"><use href="#pin"/></svg>
<svg class="ic" style="left:24px;top:237px" width="17" height="16"><use href="#book"/></svg>
<svg class="ic" style="left:41px;top:237px" width="17" height="16"><use href="#chain"/></svg>
<div class="clip" style="left:126px;top:237px;width:26px;height:16px">
<div class="t" style="top:2px;left:2.1px;transform-origin:0 0;transform:scaleX(0.92);">FZK</div>
</div>
<div class="clip" style="left:153px;top:237px;width:70px;height:16px">
<div class="t" style="top:2px;left:2.5px;transform-origin:0 0;transform:scaleX(0.955);">00032/08</div>
</div>
<div class="clip" style="left:224px;top:237px;width:118px;height:16px">
<div class="t" style="top:2px;left:2.5px;transform-origin:0 0;transform:scaleX(0.888);">2008-02-18</div>
</div>
<div class="clip" style="left:343px;top:237px;width:58px;height:16px">
<div class="t" style="top:2px;left:2.3px;transform-origin:0 0;transform:scaleX(0.882);">2008-02-18</div>
</div>
<div class="clip" style="left:402px;top:237px;width:14px;height:16px">
<div class="t" style="top:2px;left:1.7px;transform-origin:0 0;transform:scaleX(0.9);">P</div>
</div>
<div class="clip" style="left:417px;top:237px;width:66px;height:16px">
<div class="t" style="top:2px;transform-origin:100% 0;transform:scaleX(0.895);right:2.6px;">- 1.99</div>
</div>
<div class="clip" style="left:484px;top:237px;width:23px;height:16px">
<div class="t" style="top:2px;left:1.0px;transform-origin:0 0;transform:scaleX(1.116);">ZŁ</div>
</div>
<div class="clip" style="left:508px;top:237px;width:70px;height:16px">
<div class="t" style="top:2px;transform-origin:100% 0;transform:scaleX(0.895);right:2.6px;">0.00</div>
</div>
<div class="clip" style="left:579px;top:237px;width:70px;height:16px">
<div class="t" style="top:2px;transform-origin:100% 0;transform:scaleX(0.895);right:2.6px;">0.00</div>
</div>
<div class="clip" style="left:721px;top:237px;width:31px;height:16px">
<div class="t" style="top:2px;left:1.4px;transform-origin:0 0;transform:scaleX(1.021);">RZ</div>
</div>
<div style="left:417px;top:253px;width:66px;height:16px;background:#C0C0C0"></div>
<svg class="ic" style="left:24px;top:253px" width="17" height="16"><use href="#book"/></svg>
<div class="clip" style="left:126px;top:253px;width:26px;height:16px">
<div class="t" style="top:2px;left:2.1px;transform-origin:0 0;transform:scaleX(0.92);">FZV</div>
</div>
<div class="clip" style="left:153px;top:253px;width:70px;height:16px">
<div class="t" style="top:2px;left:2.5px;transform-origin:0 0;transform:scaleX(0.902);">FD24890</div>
</div>
<div class="clip" style="left:224px;top:253px;width:118px;height:16px">
<div class="t" style="top:2px;left:2.5px;transform-origin:0 0;transform:scaleX(0.888);">2008-02-01</div>
</div>
<div class="clip" style="left:343px;top:253px;width:58px;height:16px">
<div class="t" style="top:2px;color:#FF0000;left:2.3px;transform-origin:0 0;transform:scaleX(0.882);"><u>2008-02-08</u></div>
</div>
<div class="clip" style="left:402px;top:253px;width:14px;height:16px">
<div class="t" style="top:2px;left:1.7px;transform-origin:0 0;transform:scaleX(0.9);">C</div>
</div>
<div class="clip" style="left:417px;top:253px;width:66px;height:16px">
<div class="t" style="top:2px;transform-origin:100% 0;transform:scaleX(0.895);right:2.6px;">5.65</div>
</div>
<div class="clip" style="left:484px;top:253px;width:23px;height:16px">
<div class="t" style="top:2px;left:1.0px;transform-origin:0 0;transform:scaleX(1.116);">ZŁ</div>
</div>
<div class="clip" style="left:508px;top:253px;width:70px;height:16px">
<div class="t" style="top:2px;transform-origin:100% 0;transform:scaleX(0.895);right:2.6px;">5.65</div>
</div>
<div class="clip" style="left:579px;top:253px;width:70px;height:16px">
<div class="t" style="top:2px;transform-origin:100% 0;transform:scaleX(0.895);right:2.6px;">5.65</div>
</div>
<div class="clip" style="left:721px;top:253px;width:31px;height:16px">
<div class="t" style="top:2px;left:1.4px;transform-origin:0 0;transform:scaleX(1.021);">RZ</div>
</div>
<div style="left:417px;top:269px;width:66px;height:16px;background:#C0C0C0"></div>
<svg class="ic" style="left:24px;top:269px" width="17" height="16"><use href="#book"/></svg>
<div class="clip" style="left:126px;top:269px;width:26px;height:16px">
<div class="t" style="top:2px;left:2.1px;transform-origin:0 0;transform:scaleX(0.92);">FZV</div>
</div>
<div class="clip" style="left:153px;top:269px;width:70px;height:16px">
<div class="t" style="top:2px;left:2.5px;transform-origin:0 0;transform:scaleX(0.902);">FD25218</div>
</div>
<div class="clip" style="left:224px;top:269px;width:118px;height:16px">
<div class="t" style="top:2px;left:2.5px;transform-origin:0 0;transform:scaleX(0.888);">2008-02-01</div>
</div>
<div class="clip" style="left:343px;top:269px;width:58px;height:16px">
<div class="t" style="top:2px;color:#FF0000;left:2.3px;transform-origin:0 0;transform:scaleX(0.882);"><u>2008-02-08</u></div>
</div>
<div class="clip" style="left:402px;top:269px;width:14px;height:16px">
<div class="t" style="top:2px;left:1.7px;transform-origin:0 0;transform:scaleX(0.9);">C</div>
</div>
<div class="clip" style="left:417px;top:269px;width:66px;height:16px">
<div class="t" style="top:2px;transform-origin:100% 0;transform:scaleX(0.895);right:2.6px;">5.80</div>
</div>
<div class="clip" style="left:484px;top:269px;width:23px;height:16px">
<div class="t" style="top:2px;left:1.0px;transform-origin:0 0;transform:scaleX(1.116);">ZŁ</div>
</div>
<div class="clip" style="left:508px;top:269px;width:70px;height:16px">
<div class="t" style="top:2px;transform-origin:100% 0;transform:scaleX(0.895);right:2.6px;">5.80</div>
</div>
<div class="clip" style="left:579px;top:269px;width:70px;height:16px">
<div class="t" style="top:2px;transform-origin:100% 0;transform:scaleX(0.895);right:2.6px;">5.80</div>
</div>
<div class="clip" style="left:721px;top:269px;width:31px;height:16px">
<div class="t" style="top:2px;left:1.4px;transform-origin:0 0;transform:scaleX(1.021);">RZ</div>
</div>
<div class="hs" style="left:23px"></div><div class="ds" style="left:23px"></div>
<div class="hs" style="left:40px"></div><div class="ds" style="left:40px"></div>
<div class="hs" style="left:57px"></div><div class="ds" style="left:57px"></div>
<div class="hs" style="left:74px"></div><div class="ds" style="left:74px"></div>
<div class="hs" style="left:91px"></div><div class="ds" style="left:91px"></div>
<div class="hs" style="left:108px"></div><div class="ds" style="left:108px"></div>
<div class="hs" style="left:125px"></div><div class="ds" style="left:125px"></div>
<div class="hs" style="left:152px"></div><div class="ds" style="left:152px"></div>
<div class="hs" style="left:223px"></div><div class="ds" style="left:223px"></div>
<div class="hs" style="left:342px"></div><div class="ds" style="left:342px"></div>
<div class="hs" style="left:401px"></div><div class="ds" style="left:401px"></div>
<div class="hs" style="left:416px"></div><div class="ds" style="left:416px"></div>
<div class="hs" style="left:483px"></div><div class="ds" style="left:483px"></div>
<div class="hs" style="left:507px"></div><div class="ds" style="left:507px"></div>
<div class="hs" style="left:578px"></div><div class="ds" style="left:578px"></div>
<div class="hs" style="left:649px"></div><div class="ds" style="left:649px"></div>
<div class="hs" style="left:720px"></div><div class="ds" style="left:720px"></div>
<div class="sunk" style="left:5px;top:58px;width:766px;height:248px"></div>
<div class="track" style="left:753px;top:60px;width:16px;height:228px"></div>
<div class="sbbtn" style="left:753px;top:60px;width:16px;height:16px"><svg style="left:4px;top:6px" width="7" height="4" viewBox="0 0 7 4" shape-rendering="crispEdges"><path d="M3 0h1v1h1v1h1v1h1v1H0V3h1V2h1V1h1z"/></svg></div>
<div class="sbbtn" style="left:753px;top:76px;width:16px;height:16px"></div>
<div class="sbbtn" style="left:753px;top:272px;width:16px;height:16px"><svg style="left:4px;top:6px" width="7" height="4" viewBox="0 0 7 4" shape-rendering="crispEdges"><path d="M0 0h7v1H6v1H5v1H4v1H3V3H2V2H1V1H0z"/></svg></div>
<div class="track" style="left:7px;top:288px;width:746px;height:16px"></div>
<div class="sbbtn" style="left:7px;top:288px;width:16px;height:16px"><svg style="left:5px;top:4px" width="4" height="7" viewBox="0 0 4 7" shape-rendering="crispEdges"><path d="M3 0h1v7H3V6H2V5H1V4H0V3h1V2h1V1h1z"/></svg></div>
<div class="sbbtn" style="left:23px;top:288px;width:16px;height:16px"></div>
<div class="sbbtn" style="left:737px;top:288px;width:16px;height:16px"><svg style="left:6px;top:4px" width="4" height="7" viewBox="0 0 4 7" shape-rendering="crispEdges"><path d="M0 0h1v1h1v1h1v1h1v1H3v1H2v1H1v1H0z"/></svg></div>
<div style="left:753px;top:288px;width:16px;height:16px;background:#D4D0C8"></div>
<svg style="left:380px;top:145px" width="13" height="21" viewBox="0 0 13 21" shape-rendering="crispEdges"><path d="M0.5 0.5v16l3.7-3.6 2.6 6.3 2.1-1-2.6-6h5z" fill="#fff" stroke="#000"/></svg>
<div class="t" style="top:312px;right:684.0px;transform-origin:100% 0;transform:scaleX(0.902);">Rozr<u>a</u>chunki dla:</div>
<div class="t" style="top:333px;right:684.0px;transform-origin:100% 0;transform:scaleX(0.908);"><u>P</u>orządek wg:</div>
<div class="t" style="top:354px;right:684.0px;transform-origin:100% 0;transform:scaleX(0.902);">Typ doku<u>m</u>entu:</div>
<div class="t" style="top:375px;right:684.0px;transform-origin:100% 0;transform:scaleX(0.904);">Typ rozrac<u>h</u>unku:</div>
<div class="combo yel" style="left:95px;top:308px;width:245px">
<div class="clip" style="left:2px;top:2px;width:226px;height:17px">
<div class="t" style="top:2px;left:2.0px;transform-origin:0 0;transform:scaleX(0.896);">(-) Rozrahunki test - dużo KNT, ZŁ - Polski</div>
<div class="t" style="top:2px;left:204.2px;transform-origin:0 0;transform:scaleX(1.102);">Złoty</div>
</div>
<div class="sunk" style="left:0;top:0;width:245px;height:21px"></div>
<div class="dd" style="left:228px"><svg width="7" height="4" viewBox="0 0 7 4" shape-rendering="crispEdges"><path d="M0 0h7v1H6v1H5v1H4v1H3V3H2V2H1V1H0z"/></svg></div>
</div>
<div class="combo" style="left:95px;top:329px;width:198px">
<div class="clip" style="left:2px;top:2px;width:179px;height:17px">
<div class="t" style="top:2px;left:1.9px;transform-origin:0 0;transform:scaleX(0.901);">6 - Kwota dokumentu</div>
</div>
<div class="sunk" style="left:0;top:0;width:198px;height:21px"></div>
<div class="dd" style="left:181px"><svg width="7" height="4" viewBox="0 0 7 4" shape-rendering="crispEdges"><path d="M0 0h7v1H6v1H5v1H4v1H3V3H2V2H1V1H0z"/></svg></div>
</div>
<div class="combo yel" style="left:95px;top:350px;width:198px">
<div class="clip" style="left:2px;top:2px;width:179px;height:17px">
<div class="t" style="top:2px;left:2.0px;transform-origin:0 0;transform:scaleX(0.9);">- Wszystkie</div>
</div>
<div class="sunk" style="left:0;top:0;width:198px;height:21px"></div>
<div class="dd" style="left:181px"><svg width="7" height="4" viewBox="0 0 7 4" shape-rendering="crispEdges"><path d="M0 0h7v1H6v1H5v1H4v1H3V3H2V2H1V1H0z"/></svg></div>
</div>
<div class="combo yel" style="left:95px;top:371px;width:105px">
<div class="clip" style="left:2px;top:2px;width:86px;height:17px">
<div class="t" style="top:2px;left:2.0px;transform-origin:0 0;transform:scaleX(0.9);">- Wszystkie</div>
</div>
<div class="sunk" style="left:0;top:0;width:105px;height:21px"></div>
<div class="dd" style="left:88px"><svg width="7" height="4" viewBox="0 0 7 4" shape-rendering="crispEdges"><path d="M0 0h7v1H6v1H5v1H4v1H3V3H2V2H1V1H0z"/></svg></div>
</div>
<div class="combo" style="left:207px;top:371px;width:86px">
<div class="clip" style="left:2px;top:2px;width:67px;height:17px">
<div class="t" style="top:2px;left:1.5px;transform-origin:0 0;transform:scaleX(0.916);">Data dok.</div>
</div>
<div class="sunk" style="left:0;top:0;width:86px;height:21px"></div>
<div class="dd" style="left:69px"><svg width="7" height="4" viewBox="0 0 7 4" shape-rendering="crispEdges"><path d="M0 0h7v1H6v1H5v1H4v1H3V3H2V2H1V1H0z"/></svg></div>
</div>
<div class="combo" style="left:294px;top:329px;width:154px">
<div style="left:3px;top:3px;width:1px;height:13px;background:#000"></div>
<div class="sunk" style="left:0;top:0;width:154px;height:21px"></div>
</div>
<div class="combo yel" style="left:294px;top:350px;width:154px">
<div class="clip" style="left:2px;top:2px;width:135px;height:17px">
<div class="t" style="top:2px;left:8.6px;transform-origin:0 0;transform:scaleX(0.891);">- Dowolna forma pł.</div>
</div>
<div class="sunk" style="left:0;top:0;width:154px;height:21px"></div>
<div class="dd" style="left:137px"><svg width="7" height="4" viewBox="0 0 7 4" shape-rendering="crispEdges"><path d="M0 0h7v1H6v1H5v1H4v1H3V3H2V2H1V1H0z"/></svg></div>
</div>
<div class="combo" style="left:294px;top:371px;width:75px">
<div class="sunk" style="left:0;top:0;width:75px;height:21px"></div>
</div>
<div class="combo" style="left:374px;top:371px;width:74px">
<div class="sunk" style="left:0;top:0;width:74px;height:21px"></div>
</div>
<div class="cb" style="left:346px;top:312px"><svg width="7" height="7" viewBox="0 0 7 7" shape-rendering="crispEdges"><path d="M0 2h1v1h1v1h1V3h1V2h1V1h1V0h1v3H6v1H5v1H4v1H3v1H2V6H1V5H0z"/></svg></div>
<div class="t" style="top:311px;left:364.1px;transform-origin:0 0;transform:scaleX(0.885);">Dla <u>w</u>szystkich rej.</div>
<svg class="ic" style="left:452px;top:309px" width="17" height="16"><use href="#pin"/></svg>
<div class="cb" style="left:469px;top:312px"><svg width="7" height="7" viewBox="0 0 7 7" shape-rendering="crispEdges"><path d="M0 2h1v1h1v1h1V3h1V2h1V1h1V0h1v3H6v1H5v1H4v1H3v1H2V6H1V5H0z"/></svg></div>
<div class="t" style="top:311px;left:487.3px;transform-origin:0 0;transform:scaleX(0.905);"><u>R</u>ozliczone</div>
<div class="cb" style="left:469px;top:327px"><svg width="7" height="7" viewBox="0 0 7 7" shape-rendering="crispEdges"><path d="M0 2h1v1h1v1h1V3h1V2h1V1h1V0h1v3H6v1H5v1H4v1H3v1H2V6H1V5H0z"/></svg></div>
<div class="t" style="top:326px;left:487.4px;transform-origin:0 0;transform:scaleX(0.89);"><u>N</u>ie rozliczone</div>
<div class="cb" style="left:469px;top:342px"><svg width="7" height="7" viewBox="0 0 7 7" shape-rendering="crispEdges"><path d="M0 2h1v1h1v1h1V3h1V2h1V1h1V0h1v3H6v1H5v1H4v1H3v1H2V6H1V5H0z"/></svg></div>
<div class="t" style="top:341px;left:487.3px;transform-origin:0 0;transform:scaleX(0.915);">W <u>b</u>uforze</div>
<div class="cb" style="left:469px;top:357px"></div>
<div class="t" style="top:356px;left:487.4px;transform-origin:0 0;transform:scaleX(0.887);">Tylko prze<u>t</u>erminowane</div>
<div class="cb" style="left:469px;top:372px"></div>
<div class="t" style="top:371px;left:487.3px;transform-origin:0 0;transform:scaleX(0.902);">Tylko z blokadą nal. od<u>s</u>etek</div>
<div class="cb" style="left:557px;top:312px"></div>
<div class="cb" style="left:557px;top:327px"></div>
<div class="cb dis" style="left:557px;top:342px"></div>
<div class="t" style="top:311px;left:575.8px;transform-origin:0 0;transform:scaleX(0.9);">Tylko B<u>O</u></div>
<div class="t" style="top:326px;left:575.9px;transform-origin:0 0;transform:scaleX(0.882);">Rozlicz<u>e</u>nia</div>
<div class="t" style="top:341px;color:#808080;left:575.8px;transform-origin:0 0;transform:scaleX(0.91);text-shadow:1px 1px #fff;">Po<u>k</u>aż w zł.</div>
<svg style="left:740px;top:306px" width="30" height="32" viewBox="740 306 30 32"><g fill="none" stroke-linecap="butt"><path d="M748.6 319.2C748.6 315.2 751 313.5 754.6 313.5C758.6 313.5 760.6 315.6 760.6 318.2C760.6 321.6 754.6 323 754.6 327.8" stroke="#0A3CC0" stroke-width="5.4"/><path d="M748.6 318.6C748.6 315.4 751 313.7 754.6 313.7C758.4 313.7 760.4 315.8 760.4 318.2C760.4 321.4 754.6 323 754.6 327.2" stroke="#1878F0" stroke-width="3.2"/><path d="M749 317C749.4 315 751.5 313.6 754.4 313.6" stroke="#70B8FF" stroke-width="1.4"/></g><rect x="751.8" y="330" width="5.6" height="5" fill="#0A3CC0"/><rect x="752.8" y="331" width="3.6" height="3" fill="#1878F0"/></svg>
<div class="t" style="top:396px;right:713.1px;transform-origin:100% 0;transform:scaleX(0.949);">Teczka:</div>
<div class="t" style="top:410px;right:713.1px;transform-origin:100% 0;transform:scaleX(0.902);">Forma płat.:</div>
<div class="t" style="top:424px;right:713.2px;transform-origin:100% 0;transform:scaleX(0.895);">Nr ewiden.:</div>
<div class="t" style="top:438px;right:713.2px;transform-origin:100% 0;transform:scaleX(0.859);">Opis:</div>
<div class="t" style="top:396px;font-weight:bold;left:66.9px;transform-origin:0 0;transform:scaleX(1.122);">IN NR. 2008.12/2/1</div>
<div class="t" style="top:410px;font-weight:bold;left:67.0px;transform-origin:0 0;transform:scaleX(1.002);">GOTÓWKA</div>
<div class="t" style="top:424px;font-weight:bold;left:67.0px;transform-origin:0 0;transform:scaleX(1.034);">FSK (1)</div>
<div class="t" style="top:396px;left:226.1px;transform-origin:0 0;transform:scaleX(0.885);">Kwota rozliczeń:</div>
<div class="t" style="top:410px;left:226.1px;transform-origin:0 0;transform:scaleX(0.886);">Do rozliczenia:</div>
<div class="t" style="top:424px;left:226.1px;transform-origin:0 0;transform:scaleX(0.89);">Do przelewu:</div>
<div class="t" style="top:396px;font-weight:bold;right:385.2px;transform-origin:100% 0;transform:scaleX(1.088);">- 1 101.03</div>
<div class="t" style="top:410px;font-weight:bold;right:385.1px;transform-origin:100% 0;transform:scaleX(1.129);">0.00</div>
<div class="t" style="top:424px;font-weight:bold;right:385.1px;transform-origin:100% 0;transform:scaleX(1.129);">0.00</div>
<div class="t" style="top:396px;left:402.0px;transform-origin:0 0;transform:scaleX(0.926);">Dokument w zł.:</div>
<div class="t" style="top:396px;font-weight:bold;right:215.0px;transform-origin:100% 0;transform:scaleX(1.09);">- 1 101.03</div>
<div class="btn" style="left:8px;top:457px;width:75px"></div>
<div class="t" style="top:463px;left:-154.0px;width:400px;text-align:center;transform-origin:50% 0;transform:scaleX(0.906);">F2 Dodaj</div>
<div class="btn" style="left:83px;top:457px;width:75px"></div>
<div class="t" style="top:463px;left:-79.0px;width:400px;text-align:center;transform-origin:50% 0;transform:scaleX(0.906);">F5 Drukuj</div>
<div class="btn" style="left:158px;top:457px;width:75px"></div>
<div class="t" style="top:463px;left:-4.0px;width:400px;text-align:center;transform-origin:50% 0;transform:scaleX(0.921);">F8 Usuń</div>
<div class="btn" style="left:233px;top:457px;width:80px"></div>
<div class="t" style="top:463px;left:73.5px;width:400px;text-align:center;transform-origin:50% 0;transform:scaleX(0.911);">SP Zaznacz</div>
<div class="btn" style="left:313px;top:457px;width:120px"></div>
<div class="t" style="top:463px;left:173.5px;width:400px;text-align:center;transform-origin:50% 0;transform:scaleX(0.925);">F11 Transakcje</div>
<div class="btn" style="left:433px;top:457px;width:100px"></div>
<div class="t" style="top:463px;left:283.5px;width:400px;text-align:center;transform-origin:50% 0;transform:scaleX(0.905);">F12 Windykacja</div>
<div class="btn" style="left:533px;top:457px;width:112px"></div>
<div class="t" style="top:463px;left:389.5px;width:400px;text-align:center;transform-origin:50% 0;transform:scaleX(0.883);">Ctrl+PgUp Następny</div>
<div class="btn" style="left:8px;top:482px;width:75px"></div>
<div class="t" style="top:488px;left:-154.0px;width:400px;text-align:center;transform-origin:50% 0;transform:scaleX(0.908);">F3 Szukaj</div>
<div class="btn" style="left:83px;top:482px;width:75px"></div>
<div class="t" style="top:488px;left:-79.0px;width:400px;text-align:center;transform-origin:50% 0;transform:scaleX(0.893);">F6 Rozlicz</div>
<div class="btn" style="left:158px;top:482px;width:75px"></div>
<div class="t" style="top:488px;left:-4.0px;width:400px;text-align:center;transform-origin:50% 0;transform:scaleX(0.889);">Shift+F8 Usuń</div>
<div class="btn" style="left:233px;top:482px;width:80px"></div>
<div class="t" style="top:488px;left:73.5px;width:400px;text-align:center;transform-origin:50% 0;transform:scaleX(0.883);">Ctrl+SP Kw. cz.</div>
<div class="btn" style="left:313px;top:482px;width:120px"></div>
<div class="t" style="top:488px;left:173.5px;width:400px;text-align:center;transform-origin:50% 0;transform:scaleX(0.903);">Sh+F11 Gen. p. sald</div>
<div class="btn" style="left:433px;top:482px;width:100px"></div>
<div class="t" style="top:488px;left:283.5px;width:400px;text-align:center;transform-origin:50% 0;transform:scaleX(0.901);">Sh+F12 Kontakty</div>
<div class="btn" style="left:533px;top:482px;width:112px"></div>
<div class="t" style="top:488px;left:389.5px;width:400px;text-align:center;transform-origin:50% 0;transform:scaleX(0.874);">Ctrl+PgDn Poprzedni</div>
<div class="btn" style="left:8px;top:507px;width:75px"></div>
<div class="t" style="top:513px;left:-154.0px;width:400px;text-align:center;transform-origin:50% 0;transform:scaleX(0.893);">F4 Popraw</div>
<div class="btn" style="left:83px;top:507px;width:75px"></div>
<div class="t" style="top:513px;left:-79.0px;width:400px;text-align:center;transform-origin:50% 0;transform:scaleX(0.881);">F7 Podsumuj</div>
<div class="btn" style="left:158px;top:507px;width:75px"></div>
<div class="t" style="top:513px;left:-4.0px;width:400px;text-align:center;transform-origin:50% 0;transform:scaleX(0.895);">F9 Przelew</div>
<div class="btn" style="left:233px;top:507px;width:80px"></div>
<div class="t" style="top:513px;left:73.5px;width:400px;text-align:center;transform-origin:50% 0;transform:scaleX(0.912);">F10 Wskaźniki</div>
<div class="btn" style="left:313px;top:507px;width:120px"></div>
<div class="t" style="top:513px;left:173.5px;width:400px;text-align:center;transform-origin:50% 0;transform:scaleX(0.882);">Ctrl+F11 Gen w. do zap.</div>
<div style="left:693px;top:457px;width:75px;height:25px;background:#000"></div>
<div class="btn" style="left:694px;top:458px;width:73px;height:23px"></div>
<div class="t" style="top:463px;left:531.5px;width:400px;text-align:center;transform-origin:50% 0;transform:scaleX(0.909);">Do<u>k</u>ument</div>
<div class="btn" style="left:693px;top:482px;width:75px"></div>
<div class="t" style="top:488px;font-weight:bold;left:530.0px;width:400px;text-align:center;transform-origin:50% 0;transform:scaleX(0.98);"><u>Z</u>amknij</div>
</body></html>
